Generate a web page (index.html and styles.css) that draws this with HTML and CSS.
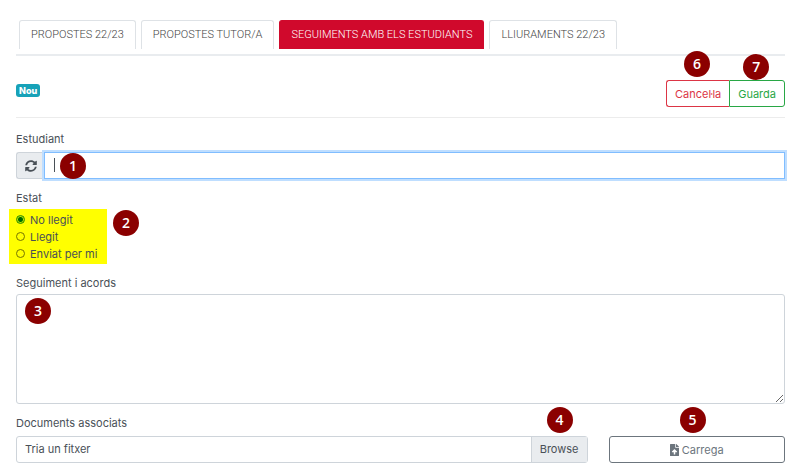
FILE: index.html
```html
<!DOCTYPE html>
<html lang="ca">
<head>
<meta charset="utf-8">
<title>Seguiments amb els estudiants</title>
<meta name="viewport" content="width=device-width, initial-scale=1">
<link rel="stylesheet" href="styles.css">
</head>
<body>
<main class="page">
  <nav class="tabs">
    <a class="tab" href="#propostes">PROPOSTES 22/23</a>
    <a class="tab" href="#tutor">PROPOSTES TUTOR/A</a>
    <a class="tab tab-active" href="#seguiments">SEGUIMENTS AMB ELS ESTUDIANTS</a>
    <a class="tab" href="#lliuraments">LLIURAMENTS 22/23</a>
  </nav>
  <form class="form">
    <header class="toolbar">
      <span class="status">Nou</span>
      <div class="actions">
        <div class="anchor"><button type="button" class="btn btn-cancel">Cancel·la</button><span class="marker marker-6">6</span></div>
        <div class="anchor"><button type="button" class="btn btn-save">Guarda</button><span class="marker marker-7">7</span></div>
      </div>
    </header>

    <div class="field">
      <label class="label" for="student">Estudiant</label>
      <div class="input-group anchor">
        <button type="button" class="refresh" aria-label="Actualitza">
          <svg viewBox="0 0 512 512" width="12" height="12" aria-hidden="true"><path fill="currentColor" d="M370.7 133.3C339.5 104 298.900 88 255.800 88c-77.500.1-144.300 53.200-162.800 126.900-1.300 5.400-6.100 9.100-11.700 9.100H24.100c-7.500 0-13.200-6.800-11.800-14.200C33.900 94.900 134.800 8 256 8c66.400 0 126.800 26.100 171.300 68.700L463 41c15.100-15.100 41-4.400 41 17v134c0 13.300-10.700 24-24 24H346c-21.400 0-32.100-25.900-17-41l41.700-41.700zM32 296h134c21.400 0 32.100 25.900 17 41l-41.800 41.800c31.300 29.300 71.800 45.300 114.900 45.200 77.400-.1 144.300-53.100 162.800-126.800 1.300-5.400 6.100-9.100 11.700-9.100h57.300c7.500 0 13.200 6.800 11.800 14.200C478.100 417.100 377.200 504 256 504c-66.400 0-126.800-26.100-171.300-68.700L49 471c-15.100 15.100-41 4.400-41-17V320c0-13.300 10.700-24 24-24z"/></svg>
        </button>
        <input class="student" id="student" type="text">
        <span class="caret"></span>
        <span class="marker marker-1">1</span>
      </div>
    </div>

    <fieldset class="states">
      <legend class="label label-tight">Estat</legend>
      <div class="options anchor">
        <label class="option"><input type="radio" name="state" checked>No llegit</label>
        <label class="option"><input type="radio" name="state">Llegit</label>
        <label class="option"><input type="radio" name="state">Enviat per mi</label>
        <span class="marker marker-2">2</span>
      </div>
    </fieldset>

    <div class="field">
      <label class="label label-tight" for="notes">Seguiment i acords</label>
      <div class="anchor">
        <textarea class="notes" id="notes"></textarea>
        <span class="marker marker-3">3</span>
      </div>
    </div>

    <div class="field">
      <label class="label" for="document">Documents associats</label>
      <div class="upload">
        <div class="file anchor">
          <input class="file-input" id="document" type="file">
          <span class="file-name">Tria un fitxer</span>
          <span class="file-browse">Browse</span>
          <span class="marker marker-4">4</span>
        </div>
        <div class="send anchor">
          <button type="button" class="btn btn-send">
            <svg viewBox="0 0 384 512" width="9" height="12" aria-hidden="true"><path fill="currentColor" fill-rule="evenodd" d="M224 136V0H24C10.700 0 0 10.700 0 24v464c0 13.300 10.700 24 24 24h336c13.300 0 24-10.700 24-24V160H248c-13.200 0-24-10.800-24-24zM377 105 279 7c-4.500-4.500-10.600-7-17-7h-6v128h128v-6c0-6.300-2.500-12.400-7-17zM289 352h-65v80c0 8.800-7.200 16-16 16h-32c-8.800 0-16-7.200-16-16v-80H95c-14.300 0-21.400-17.300-11.300-27.400l96.500-95.700c6.400-6.400 16.700-6.400 23.100 0l96.400 95.700c10.200 10.100 3.600 27.400-10.700 27.400z"/></svg>
            Carrega
          </button>
          <span class="marker marker-5">5</span>
        </div>
      </div>
    </div>
  </form>
</main>
</body>
</html>
```

FILE: styles.css
```css
* { box-sizing: border-box; }

body {
  margin: 0;
  background: #fff;
  color: #495057;
  font: 400 11px/18px Inter, "Liberation Sans", sans-serif;
}

button, input, textarea { font: inherit; }

.page { padding: 20px 15px 10px 16px; }

.anchor { position: relative; }

.tabs {
  display: flex;
  gap: 5px;
  padding: 0 3px 5px;
  border-bottom: 2px solid #e9ecef;
}

.tab {
  padding: 5px 11px;
  border: 1px solid #dee2e6;
  border-bottom: 0;
  border-radius: 3px 3px 0 0;
  color: #444;
  font-family: Roboto, "Liberation Sans", sans-serif;
  font-weight: 300;
  text-decoration: none;
  white-space: nowrap;
}

.tab-active {
  border-color: #d0092c;
  background: #d0092c;
  color: #fff;
}

.toolbar {
  display: flex;
  justify-content: space-between;
  align-items: flex-start;
  margin-bottom: 12px;
  padding: 24px 0 10px;
  border-bottom: 1px solid #ececec;
}

.status {
  margin-top: 4px;
  padding: 0 3px;
  border-radius: 3px;
  background: #17a2b8;
  color: #fff;
  font-size: 9px;
  font-weight: 800;
  line-height: 13px;
}

.actions { display: flex; }

.btn {
  display: block;
  height: 27px;
  padding: 0 8px;
  border: 1px solid;
  border-radius: 3px;
  background: #fff;
}

.btn-cancel {
  border-right: 0;
  border-radius: 3px 0 0 3px;
  color: #dc3545;
}

.btn-save {
  border-radius: 0 3px 3px 0;
  color: #28a745;
}

.field, .states { margin: 0 0 10px; }

.states {
  padding: 0;
  border: 0;
}

.label {
  display: block;
  margin-bottom: 4px;
  padding: 0;
}

.label-tight { margin-bottom: 2px; }

.input-group { display: flex; }

.refresh {
  display: flex;
  align-items: center;
  justify-content: center;
  width: 28px;
  height: 27px;
  padding: 0;
  border: 1px solid #ced4da;
  border-right: 0;
  border-radius: 3px 0 0 3px;
  background: #e9ecef;
  color: #495057;
}

.student {
  flex: 1;
  min-width: 0;
  height: 27px;
  padding: 0 8px;
  border: 1px solid #80bdff;
  border-radius: 0;
  outline: 0;
  box-shadow: 0 0 0 2px #bfdeff;
}

.caret {
  position: absolute;
  top: 6px;
  left: 38px;
  width: 1px;
  height: 14px;
  background: #495057;
}

.options {
  width: max-content;
  margin-left: -7px;
  padding: 2px 10px 2px 7px;
  background: #ff0;
}

.option {
  display: flex;
  align-items: center;
  gap: 5px;
  height: 17px;
}

.option input {
  appearance: none;
  width: 9px;
  height: 9px;
  margin: 0;
  border: 1px solid #767600;
  border-radius: 50%;
}

.option input:checked {
  border-color: #2c8a00;
  background: radial-gradient(circle, #006b00 0 2px, #b8e800 3px);
}

.notes {
  display: block;
  width: 100%;
  height: 110px;
  padding: 4px 8px;
  border: 1px solid #ced4da;
  border-radius: 3px;
  resize: vertical;
}

.upload {
  display: grid;
  grid-template-columns: repeat(12, 1fr);
  gap: 21px;
}

.file {
  display: flex;
  grid-column: span 9;
  height: 27px;
  border: 1px solid #ced4da;
  border-radius: 3px;
  line-height: 25px;
}

.file-input {
  position: absolute;
  inset: 0;
  width: 100%;
  opacity: 0;
}

.file-name {
  flex: 1;
  padding: 0 8px;
}

.file-browse {
  padding: 0 8px;
  border-left: 1px solid #ced4da;
  background: #e9ecef;
}

.send { grid-column: span 3; }

.btn-send {
  display: flex;
  align-items: center;
  justify-content: center;
  gap: 3px;
  width: 100%;
  color: #6c757d;
}

.marker {
  position: absolute;
  width: 26px;
  height: 26px;
  border-radius: 50%;
  background: #8b0000;
  color: #fff;
  font: 600 14px/26px "Open Sans", sans-serif;
  text-align: center;
}

.marker-1 { top: 1px; left: 44px; }
.marker-2 { top: 1px; left: 104px; }
.marker-3 { top: 4px; left: 9px; }
.marker-4 { top: -30px; right: 14px; }
.marker-5 { top: -29px; left: 71px; }
.marker-6 { top: -29px; left: 18px; }
.marker-7 { top: -26px; left: 14px; }
```
